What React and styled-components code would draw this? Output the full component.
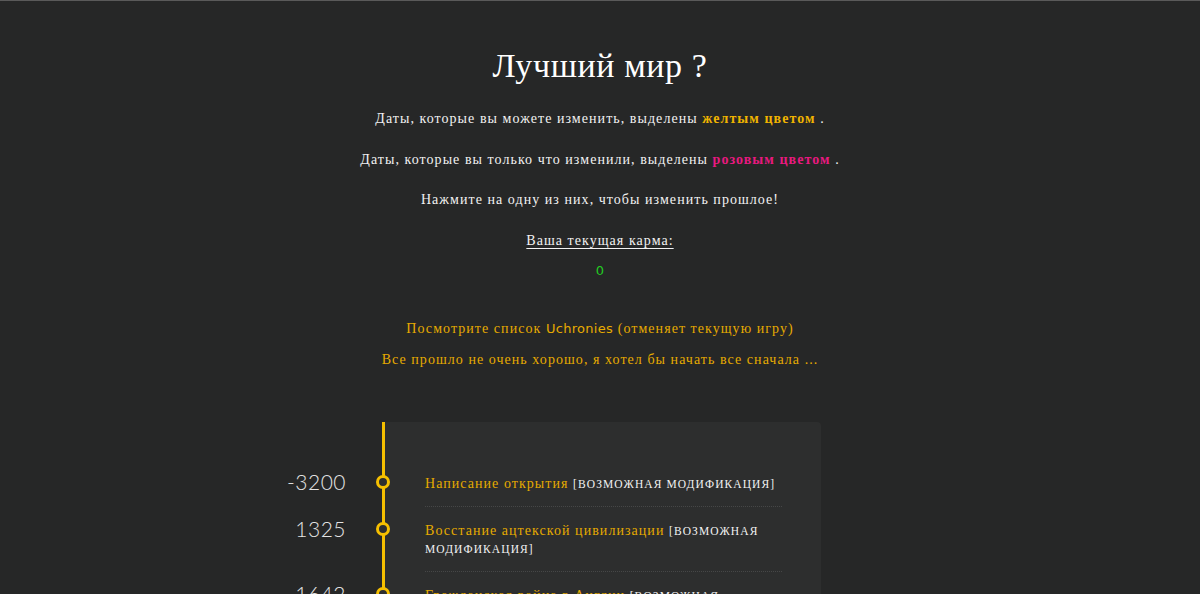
import React from 'react';
import styled, { createGlobalStyle } from 'styled-components';

const Global = createGlobalStyle`
  html, body {
    margin: 0;
    padding: 0;
    background: #262727;
  }
  body {
    border-top: 1px solid #5a5a5a;
    font-family: "Liberation Serif", "DejaVu Serif", serif;
    color: #eeeeee;
    overflow: hidden;
  }
`;

const Page = styled.div`
  width: 100%;
  min-height: 593px;
  display: flex;
  flex-direction: column;
  align-items: center;
`;

const Title = styled.h1`
  margin: 45px 0 0;
  font-weight: normal;
  font-size: 34px;
  line-height: 40px;
  letter-spacing: 0.6px;
  color: #ffffff;
`;

const Line = styled.p`
  margin: ${p => p.$gap}px 0 0;
  font-size: 14px;
  line-height: 20px;
  letter-spacing: 1.05px;
  text-align: center;
  color: ${p => (p.$link ? '#e6ab00' : '#f2f2f2')};
  text-decoration: ${p => (p.$under ? 'underline' : 'none')};
  text-underline-offset: 3px;
`;

const Strong = styled.b`
  color: ${p => p.$color};
`;

const Karma = styled.div`
  margin-top: 10px;
  font-family: "DejaVu Sans", sans-serif;
  font-size: 13px;
  line-height: 20px;
  color: #22cc22;
`;

const Tech = styled.span`
  font-family: "DejaVu Sans", sans-serif;
  font-size: 13px;
  letter-spacing: 0.3px;
`;

const Timeline = styled.div`
  margin-top: 52px;
  width: 634px;
  display: grid;
  grid-template-columns: 99px 439px;
`;

const DateCell = styled.div`
  text-align: right;
  padding-right: 36px;
  padding-top: 10px;
  font-family: Lato, "DejaVu Sans", sans-serif;
  font-weight: 300;
  font-size: 21px;
  line-height: 24px;
  letter-spacing: 0.5px;
  color: #e4e4e4;
`;

const ItemCell = styled.div`
  position: relative;
  background: #2d2e2e;
  border-left: 3px solid #f5bf00;
  padding: 0 39px 0 40px;
  height: ${p => (p.$spacer ? '38px' : 'auto')};
  border-top-right-radius: ${p => (p.$spacer ? '4px' : '0')};
`;

const Dot = styled.span`
  position: absolute;
  left: -9px;
  top: 15px;
  width: 8px;
  height: 8px;
  border: 3px solid #f5bf00;
  border-radius: 50%;
  background: #2d2e2e;
`;

const Entry = styled.div`
  padding: 15px 0 13px;
  border-bottom: 1px dotted #464747;
  font-size: 14px;
  line-height: 18px;
  letter-spacing: 1.05px;
`;

const EventName = styled.span`
  color: #e6ab00;
`;

const Mod = styled.span`
  color: #f2f2f2;
  font-size: 11.5px;
  letter-spacing: 1.1px;
`;

const events = [
  { year: '-3200', name: 'Написание открытия' },
  { year: '1325', name: 'Восстание ацтекской цивилизации' },
  { year: '1642', name: 'Гражданская война в Англии' },
];

export default function App() {
  return (
    <Page>
      <Global />
      <Title>Лучший мир ?</Title>
      <Line $gap={23}>
        Даты, которые вы можете изменить, выделены <Strong $color="#f0b400">желтым цветом</Strong> .
      </Line>
      <Line $gap={21}>
        Даты, которые вы только что изменили, выделены <Strong $color="#e8197f">розовым цветом</Strong> .
      </Line>
      <Line $gap={20}>Нажмите на одну из них, чтобы изменить прошлое!</Line>
      <Line $gap={21} $under>Ваша текущая карма:</Line>
      <Karma>0</Karma>
      <Line $gap={38} $link>
        Посмотрите список <Tech>Uchronies</Tech> (отменяет текущую игру)
      </Line>
      <Line $gap={11} $link>Все прошло не очень хорошо, я хотел бы начать все сначала ...</Line>
      <Timeline>
        <div />
        <ItemCell $spacer />
        {events.map(ev => (
          <React.Fragment key={ev.year}>
            <DateCell>{ev.year}</DateCell>
            <ItemCell>
              <Dot />
              <Entry>
                <EventName>{ev.name}</EventName> <Mod>[ВОЗМОЖНАЯ МОДИФИКАЦИЯ]</Mod>
              </Entry>
            </ItemCell>
          </React.Fragment>
        ))}
      </Timeline>
    </Page>
  );
}
